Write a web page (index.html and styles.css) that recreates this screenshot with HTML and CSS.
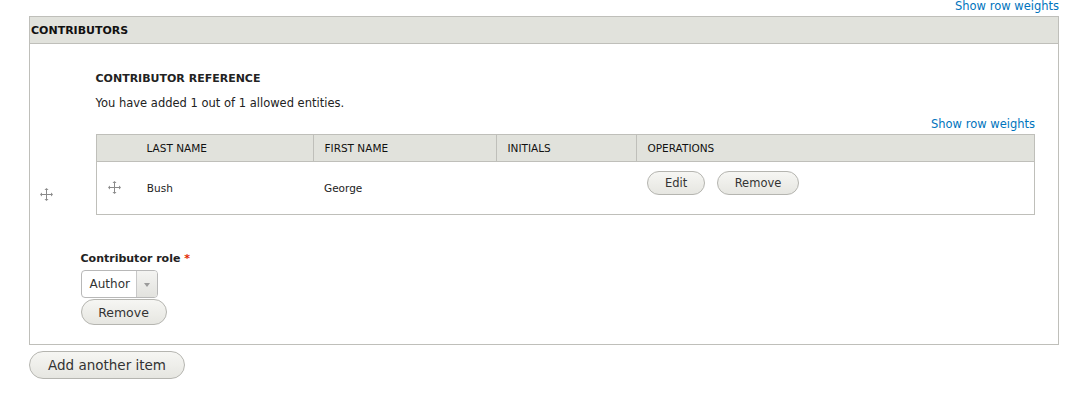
FILE: index.html
```html
<!DOCTYPE html>
<html lang="en">
<head>
    <meta charset="UTF-8">
    <title>Contributors</title>
    <link rel="stylesheet" href="styles.css">
</head>
<body>
    <div class="field-wrapper">
        <div class="weights-toggle"><a href="#">Show row weights</a></div>

        <!-- Outer multi-value table -->
        <table class="field-multiple">
            <thead>
                <tr>
                    <th colspan="2">CONTRIBUTORS</th>
                </tr>
            </thead>
            <tbody>
                <tr>
                    <td class="drag-cell">
                        <span class="handle">
                            <svg width="13" height="13" viewBox="0 0 13 13">
                                <path d="M6.5 1v11M1 6.5h11" stroke="#8a8a8a" stroke-width="1" fill="none"/>
                                <path d="M6.5 0l-2 2h4zM6.5 13l-2-2h4zM0 6.5l2-2v4zM13 6.5l-2-2v4z" fill="#8a8a8a"/>
                            </svg>
                        </span>
                    </td>
                    <td class="item-cell">
                        <div class="entity-widget">
                            <h4 class="widget-title">CONTRIBUTOR REFERENCE</h4>
                            <p class="widget-desc">You have added 1 out of 1 allowed entities.</p>
                            <div class="weights-toggle"><a href="#">Show row weights</a></div>

                            <table class="entity-table">
                                <thead>
                                    <tr>
                                        <th class="col-last">LAST NAME</th>
                                        <th class="col-first">FIRST NAME</th>
                                        <th class="col-initials">INITIALS</th>
                                        <th>OPERATIONS</th>
                                    </tr>
                                </thead>
                                <tbody>
                                    <tr>
                                        <td class="col-last">
                                            <span class="handle small">
                                                <svg width="13" height="13" viewBox="0 0 13 13">
                                                    <path d="M6.5 1v11M1 6.5h11" stroke="#8a8a8a" stroke-width="1" fill="none"/>
                                                    <path d="M6.5 0l-2 2h4zM6.5 13l-2-2h4zM0 6.5l2-2v4zM13 6.5l-2-2v4z" fill="#8a8a8a"/>
                                                </svg>
                                            </span>
                                            Bush
                                        </td>
                                        <td>George</td>
                                        <td></td>
                                        <td class="ops">
                                            <button class="btn btn-small">Edit</button>
                                            <button class="btn btn-small">Remove</button>
                                        </td>
                                    </tr>
                                </tbody>
                            </table>
                        </div>

                        <div class="form-item">
                            <label class="form-label">Contributor role <span class="required">*</span></label>
                            <div class="select">
                                <span class="select-value">Author</span>
                                <span class="select-arrow"></span>
                            </div>
                            <button class="btn btn-remove">Remove</button>
                        </div>
                    </td>
                </tr>
            </tbody>
        </table>

        <button class="btn btn-add">Add another item</button>
    </div>
</body>
</html>
```

FILE: styles.css
```css
* {
    box-sizing: border-box;
}

body {
    margin: 0;
    background: #fff;
    color: #222;
    font-family: "DejaVu Sans", Verdana, sans-serif;
    font-size: 11.5px;
}

.field-wrapper {
    padding: 0 29px 0 29px;
}

.weights-toggle {
    text-align: right;
    height: 16px;
    line-height: 12px;
}

.weights-toggle a {
    color: #0074bd;
    text-decoration: none;
    font-size: 11.5px;
}

/* Outer table */
table {
    border-collapse: collapse;
    width: 100%;
}

.field-multiple {
    border: 1px solid #bfbfba;
}

.field-multiple > thead th {
    background: #e1e2dc;
    border-bottom: 1px solid #bfbfba;
    height: 27px;
    padding: 0 1px;
    text-align: left;
    font-weight: bold;
    font-size: 11px;
    color: #111;
}

.drag-cell {
    width: 44px;
    padding: 0 0 0 10px;
    vertical-align: middle;
}

.handle {
    display: inline-block;
    width: 13px;
    height: 13px;
    vertical-align: middle;
}

.handle svg {
    display: block;
}

.item-cell {
    padding: 27px 8px 19px 7px;
    vertical-align: top;
}

.entity-widget {
    margin: 0 15px;
}

.widget-title {
    margin: 0 0 8px;
    line-height: 16px;
    font-size: 11px;
    font-weight: bold;
}

.widget-desc {
    margin: 0 0 5px;
    line-height: 16px;
    font-size: 11.5px;
}

.entity-widget .weights-toggle {
    height: 18px;
    line-height: 16px;
}

/* Inner entity table */
.entity-table {
    border: 1px solid #bfbfba;
}

.entity-table th {
    background: #e1e2dc;
    height: 27px;
    padding: 0 11px;
    border-bottom: 1px solid #bfbfba;
    border-left: 1px solid #bfbfba;
    text-align: left;
    font-weight: normal;
    font-size: 10.5px;
    color: #111;
}

.entity-table th:first-child {
    border-left: none;
    padding-left: 50px;
}

.entity-table td {
    height: 53px;
    padding: 0 11px;
    font-size: 10.5px;
    vertical-align: middle;
}

.entity-table td.col-last .handle {
    margin-right: 23px;
    margin-top: -2px;
}

.col-last { width: 217px; }
.col-first { width: 183px; }
.col-initials { width: 140px; }

.entity-table td.ops {
    vertical-align: top;
    padding-top: 9px;
}

/* Buttons */
.btn {
    display: inline-block;
    border: 1px solid #b5b5b0;
    border-radius: 20em;
    background: linear-gradient(to bottom, #f6f6f3, #e6e6e1);
    color: #333;
    font-family: "DejaVu Sans", Verdana, sans-serif;
    cursor: pointer;
}

.btn-small {
    height: 24px;
    padding: 0 17px;
    font-size: 11.5px;
    margin-right: 8px;
}

.btn-remove {
    display: block;
    height: 26px;
    width: 86px;
    margin-top: 1px;
    font-size: 12.5px;
}

.btn-add {
    margin-top: 6px;
    height: 28px;
    width: 156px;
    font-size: 13.5px;
}

/* Contributor role select */
.form-item {
    margin-top: 36px;
}

.form-label {
    display: block;
    font-weight: bold;
    font-size: 11px;
    line-height: 16px;
    margin-bottom: 3px;
}

.required {
    color: #e32700;
}

.select {
    display: flex;
    width: 77px;
    height: 28px;
    border: 1px solid #b8b8b8;
    border-radius: 4px;
    background: #fff;
    overflow: hidden;
}

.select-value {
    flex: 1;
    padding-left: 8px;
    line-height: 26px;
    font-size: 12px;
    color: #333;
}

.select-arrow {
    position: relative;
    width: 21px;
    border-left: 1px solid #c8c8c8;
    background: linear-gradient(to bottom, #f4f4f2, #e2e2de);
}

.select-arrow::after {
    content: "";
    position: absolute;
    left: 7px;
    top: 12px;
    border-left: 3px solid transparent;
    border-right: 3px solid transparent;
    border-top: 4px solid #9a9a9a;
}
```
